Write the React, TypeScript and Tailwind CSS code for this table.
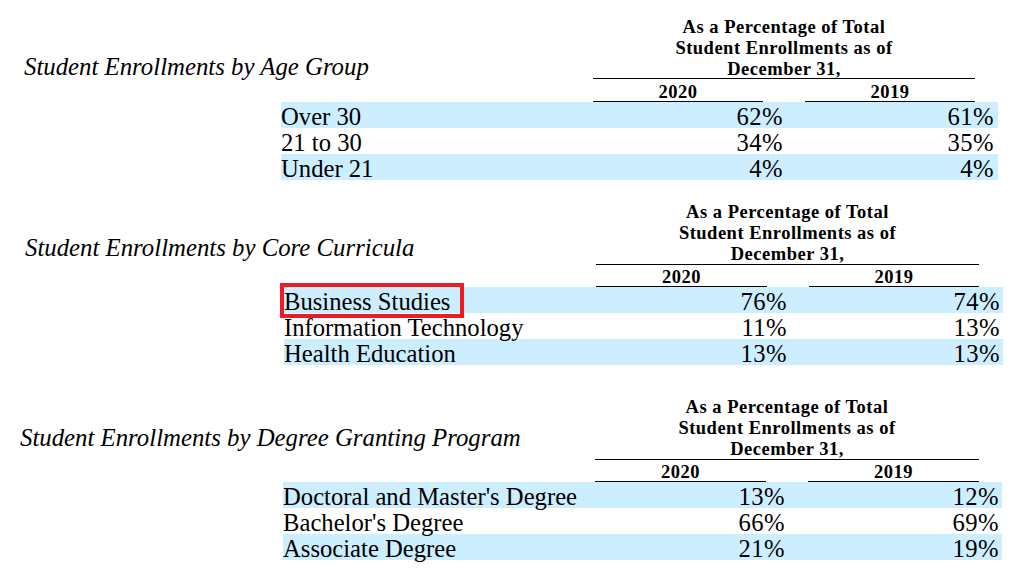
import React from "react";

type Section = {
  title: string;
  wrap: string;
  titleBox: string;
  head: string;
  colA: string;
  colB: string;
  rows: string;
  grid: string;
  data: [string, string, string][];
  boxed?: string;
};

const sections: Section[] = [
  {
    title: "Student Enrollments by Age Group",
    wrap: "pt-[16px]",
    titleBox: "w-[593px] pl-[24px] pt-[36.6px]",
    head: "w-[382px]",
    colA: "w-[170px]",
    colB: "w-[170px]",
    rows: "ml-[281px] w-[717px]",
    grid: "grid-cols-[312px_190px_211px_4px]",
    data: [
      ["Over 30", "62%", "61%"],
      ["21 to 30", "34%", "35%"],
      ["Under 21", "4%", "4%"],
    ],
  },
  {
    title: "Student Enrollments by Core Curricula",
    wrap: "mt-[21.8px]",
    titleBox: "w-[596px] pl-[25px] pt-[32.4px]",
    head: "w-[383px]",
    colA: "w-[171px]",
    colB: "w-[170px]",
    rows: "ml-[284px] w-[719px]",
    grid: "grid-cols-[312px_191px_213px_3px]",
    data: [
      ["Business Studies", "76%", "74%"],
      ["Information Technology", "11%", "13%"],
      ["Health Education", "13%", "13%"],
    ],
    boxed: "Business Studies",
  },
  {
    title: "Student Enrollments by Degree Granting Program",
    wrap: "mt-[31.3px]",
    titleBox: "w-[595px] pl-[20px] pt-[27.1px]",
    head: "w-[384px]",
    colA: "w-[171px]",
    colB: "w-[171px]",
    rows: "ml-[283px] w-[719px]",
    grid: "grid-cols-[312px_190px_214px_3px]",
    data: [
      ["Doctoral and Master's Degree", "13%", "12%"],
      ["Bachelor's Degree", "66%", "69%"],
      ["Associate Degree", "21%", "19%"],
    ],
  },
];

function EnrollmentTable({ s }: { s: Section }) {
  return (
    <div className={s.wrap}>
      <div className="flex">
        <div className={`${s.titleBox} shrink-0`}>
          <div className="whitespace-nowrap text-[24.8px] italic leading-[28px]">{s.title}</div>
        </div>
        <div className={`${s.head} shrink-0 text-[18.5px] font-bold tracking-[0.5px]`}>
          <div className="h-[63px] whitespace-nowrap border-b border-black pt-[0.5px] text-center leading-[21px]">
            As a Percentage of Total
            <br />
            Student Enrollments as of
            <br />
            December 31,
          </div>
          <div className="flex">
            <div className={`${s.colA} border-b border-black pt-[3.5px] text-center leading-[18.2px]`}>2020</div>
            <div className="w-[42px]" />
            <div className={`${s.colB} border-b border-black pt-[3.5px] text-center leading-[18.2px]`}>2019</div>
          </div>
        </div>
      </div>

      <div className={s.rows}>
        {s.data.map(([label, a, b], idx) => (
          <div
            key={label}
            className={`grid ${s.grid} h-[26px] text-[24.67px] leading-[30px] ${idx % 2 === 0 ? "bg-[#cceeff]" : ""}`}
          >
            <div className="relative whitespace-nowrap">
              {label}
              {s.boxed === label && (
                <div className="absolute -left-[4px] -top-[4px] h-[35px] w-[184px] border-[4px] border-[#ed1c24]" />
              )}
            </div>
            <div className="text-right tracking-[0.4px]">{a}</div>
            <div className="text-right tracking-[0.4px]">{b}</div>
            <div />
          </div>
        ))}
      </div>
    </div>
  );
}

export default function App() {
  return (
    <div className="h-[568px] w-[1025px] overflow-hidden bg-white font-['Liberation_Serif','Times_New_Roman',serif] text-black">
      {sections.map((s) => (
        <EnrollmentTable key={s.title} s={s} />
      ))}
    </div>
  );
}
